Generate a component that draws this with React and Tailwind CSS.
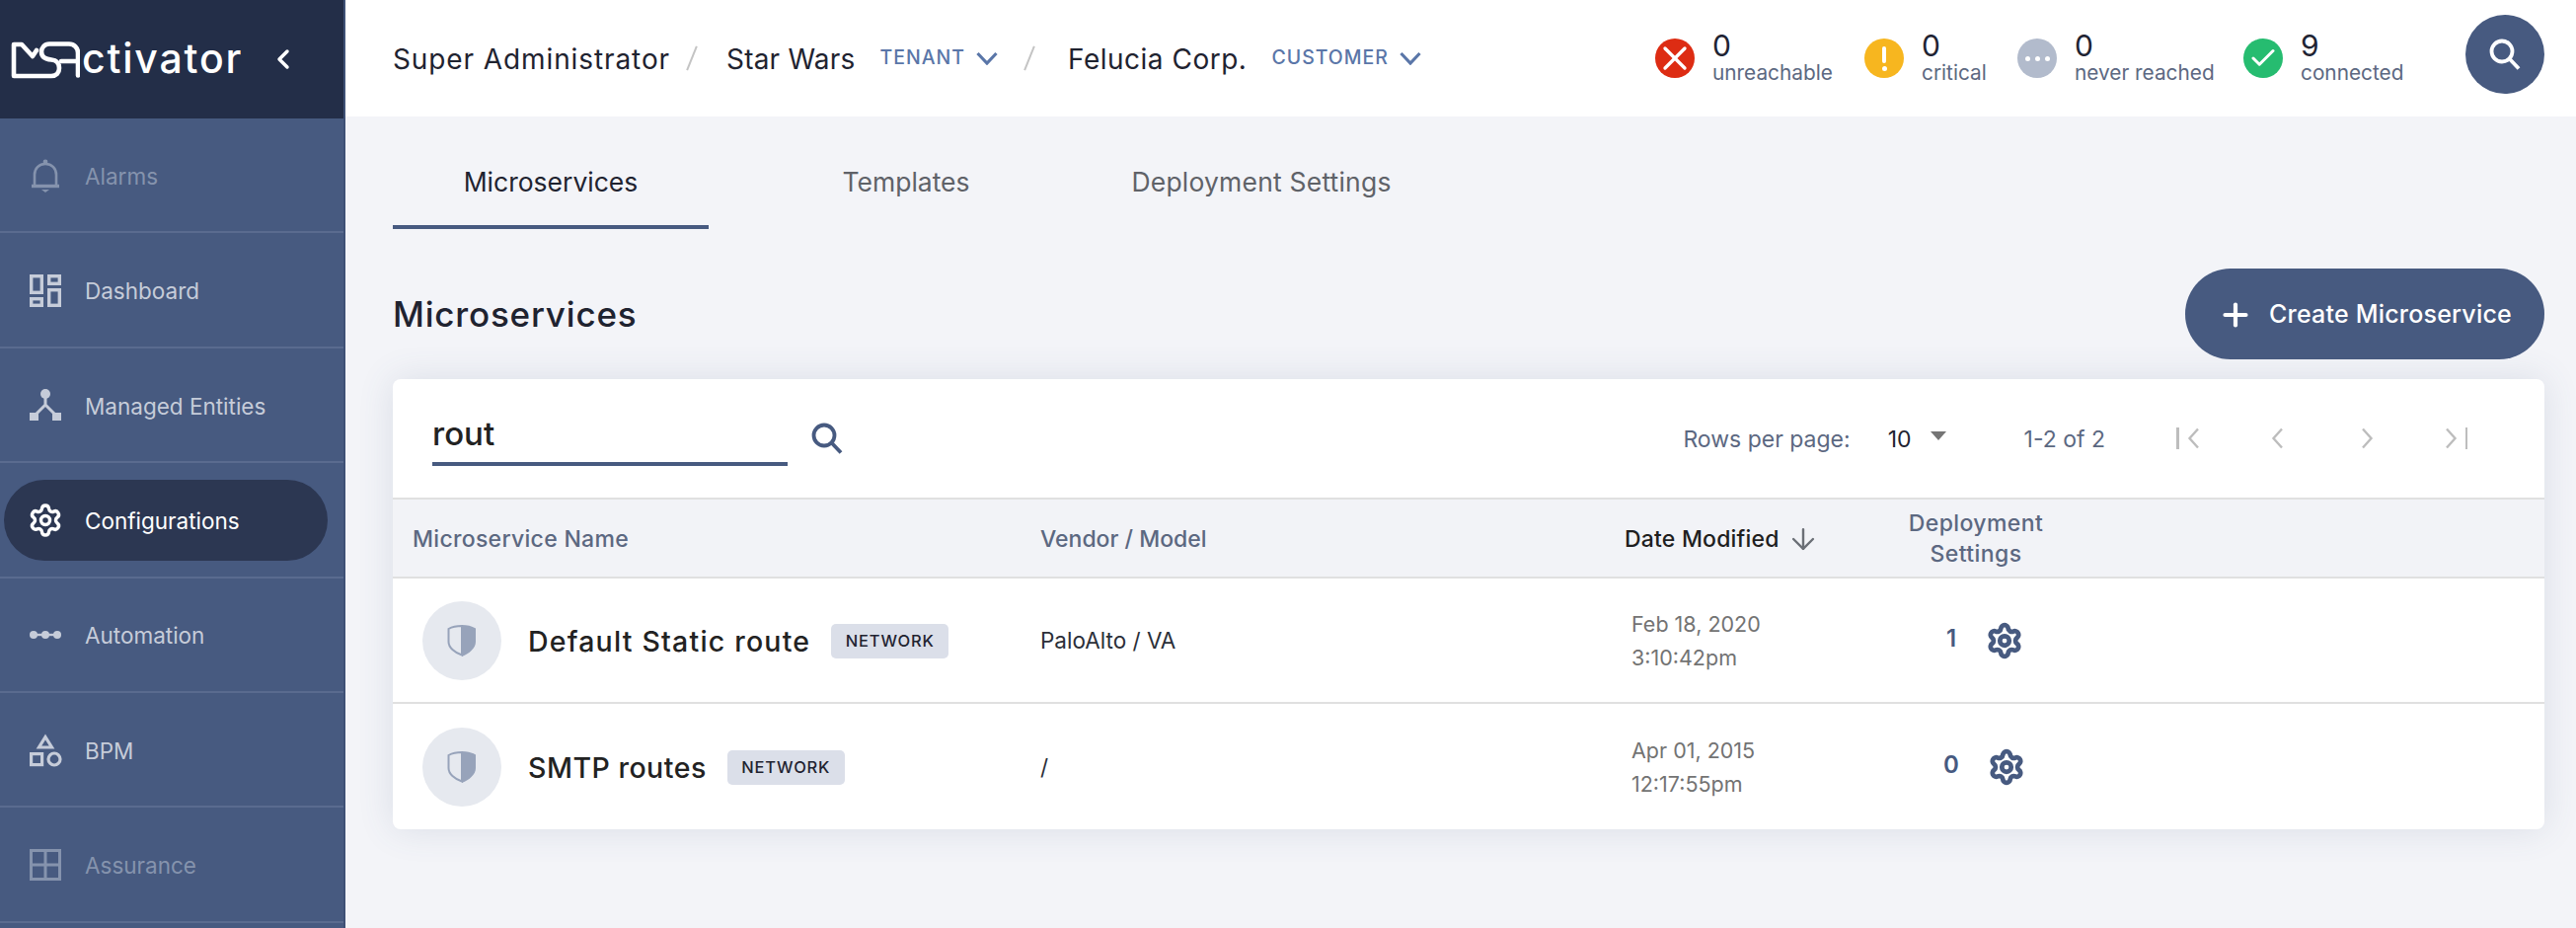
import React from 'react';
import { ChevronLeft, Plus, Settings, X, Check, ArrowDown } from 'lucide-react';

const NAV_ITEMS = [
  { label: 'Alarms', icon: 'bell', tone: 'disabled' },
  { label: 'Dashboard', icon: 'dashboard', tone: 'normal' },
  { label: 'Managed Entities', icon: 'entities', tone: 'normal' },
  { label: 'Configurations', icon: 'gear', tone: 'active' },
  { label: 'Automation', icon: 'automation', tone: 'normal' },
  { label: 'BPM', icon: 'bpm', tone: 'normal' },
  { label: 'Assurance', icon: 'assurance', tone: 'disabled' },
];

const ROWS = [
  { name: 'Default Static route', tracking: 'tracking-[1.2px]', vendor: 'PaloAlto / VA', date: 'Feb 18, 2020', time: '3:10:42pm', count: 1, gearShift: 'ml-[15px]' },
  { name: 'SMTP routes', tracking: 'tracking-[0.5px]', vendor: '/', date: 'Apr 01, 2015', time: '12:17:55pm', count: 0, gearShift: 'ml-[17px]' },
];

function NavIcon({ name }) {
  if (name === 'gear') return <Settings className="w-[36px] h-[36px]" strokeWidth={2.3} />;
  const common = { width: 34, height: 36, viewBox: '0 0 34 36', fill: 'none', stroke: 'currentColor' };
  switch (name) {
    case 'bell':
      return (
        <svg {...common} strokeWidth="2.6">
          <path d="M6 27V17C6 10.5 10.5 6 17 6s11 4.5 11 11v10" />
          <path d="M3 28.5h28" strokeWidth="3.4" />
          <circle cx="17" cy="4" r="2.4" fill="currentColor" stroke="none" />
          <path d="M13 32h8l-4 3z" fill="currentColor" stroke="none" />
        </svg>
      );
    case 'dashboard':
      return (
        <svg {...common} strokeWidth="3.4">
          <rect x="2.7" y="3.7" width="10.6" height="16.6" />
          <rect x="20.7" y="3.7" width="10.6" height="7.6" />
          <rect x="2.7" y="26.7" width="10.6" height="6.6" />
          <rect x="20.7" y="17.7" width="10.6" height="15.6" />
        </svg>
      );
    case 'entities':
      return (
        <svg {...common} strokeWidth="3">
          <circle cx="17" cy="7" r="5" fill="currentColor" stroke="none" />
          <path d="M17 10v8M17 18L7 28M17 18l10 10" />
          <rect x="1" y="26" width="9" height="8" fill="currentColor" stroke="none" />
          <rect x="24" y="26" width="9" height="8" fill="currentColor" stroke="none" />
        </svg>
      );
    case 'automation':
      return (
        <svg {...common}>
          <path d="M4 18h26" strokeWidth="2.4" />
          <circle cx="5" cy="18" r="4" fill="currentColor" stroke="none" />
          <circle cx="17" cy="18" r="4" fill="currentColor" stroke="none" />
          <circle cx="29" cy="18" r="4" fill="currentColor" stroke="none" />
        </svg>
      );
    case 'bpm':
      return (
        <svg {...common} strokeWidth="3.2">
          <path d="M17 4.5l6.5 10.5h-13z" />
          <rect x="2.6" y="21.6" width="11" height="11" />
          <circle cx="26" cy="27" r="6" />
        </svg>
      );
    default:
      return (
        <svg {...common} strokeWidth="3">
          <rect x="2.5" y="3.5" width="29" height="29" />
          <path d="M17 3.5v29M2.5 18h29" />
        </svg>
      );
  }
}

function SearchGlyph({ className = '' }) {
  return (
    <svg width="32" height="32" viewBox="0 0 32 32" fill="none" stroke="currentColor" strokeWidth="3.8" className={className}>
      <circle cx="13" cy="13" r="10.500" />
      <path d="M20.500 20.500L30 30.500" />
    </svg>
  );
}

function NavRow({ item }) {
  const color =
    item.tone === 'active' ? 'text-white' : item.tone === 'disabled' ? 'text-[#8593ad]' : 'text-[#c6ccd9]';
  return (
    <div className="h-[116.4px] border-b-2 border-[#5a6b8f] flex items-center relative">
      <div className={`flex items-center h-[82px] w-[328px] ml-1 mt-[1px] rounded-full ${item.tone === 'active' ? 'bg-[#2c3752]' : ''} ${color}`}>
        <span className="w-[82px] flex justify-center shrink-0 pl-[1px]">
          <NavIcon name={item.icon} />
        </span>
        <span className="text-[22.5px] pt-[2px]">{item.label}</span>
      </div>
    </div>
  );
}

function Sidebar() {
  return (
    <aside className="w-[350px] shrink-0 bg-[#475a80] border-r-2 border-[#3f5176] overflow-hidden">
      <div className="h-[120px] bg-[#232e48] flex items-center text-white">
        <svg width="81" height="60" viewBox="0 0 81 60" fill="none" stroke="white" strokeWidth="4.6" strokeLinecap="round" strokeLinejoin="round" className="shrink-0 mt-[3px]">
          <path d="M37 19l-4 6-11-12h-8v32h38c5 0 8-3 8-8 0-5-3-8-8-8.500-6-.5-10-3-10-8 0-4 3-8 8-8h20c5 0 9 4 9 9v23" />
          <path d="M62 30h17" />
        </svg>
        <span className="text-[41px] font-medium leading-none tracking-[1.8px] ml-[2px] -mt-[1px]">ctivator</span>
        <ChevronLeft className="w-[32px] h-[32px] ml-[25px]" strokeWidth={2.6} />
      </div>
      {NAV_ITEMS.map((item) => (
        <NavRow key={item.label} item={item} />
      ))}
    </aside>
  );
}

function Crumb({ children, className = '' }) {
  return <span className={`text-[28px] pt-[2px] text-[#1f2330] whitespace-nowrap ${className}`}>{children}</span>;
}

function Slash({ className = '' }) {
  return <span className={`w-[2px] h-[26px] bg-[#c4c4c4] rotate-[22deg] shrink-0 ${className}`} />;
}

function ScopeLabel({ children, className = '' }) {
  return (
    <span className={`flex items-center text-[#5a76a8] text-[19.5px] font-medium tracking-[1px] whitespace-nowrap ${className}`}>
      {children}
      <svg width="22" height="14" viewBox="0 0 22 14" fill="none" stroke="currentColor" strokeWidth="3.2" className="ml-[11px]">
        <path d="M1.500 2L11 12l9.500-10" />
      </svg>
    </span>
  );
}

function Status({ bg, count, label, width, children }) {
  return (
    <div className={`flex items-center ${width}`}>
      <span className={`w-[40px] h-[40px] rounded-full flex items-center justify-center shrink-0 ${bg}`}>{children}</span>
      <div className="ml-[18px] -mt-[2px]">
        <div className="text-[30px] leading-[32px] text-[#1f2433]">{count}</div>
        <div className="text-[20.8px] leading-[24px] text-[#5c6881] whitespace-nowrap">{label}</div>
      </div>
    </div>
  );
}

function TopBar() {
  return (
    <header className="h-[118px] bg-white flex items-center pl-[48px] pr-[32px]">
      <Crumb className="tracking-[0.9px]">Super Administrator</Crumb>
      <Slash className="ml-[21px]" />
      <Crumb className="ml-[34px] tracking-[0.2px]">Star Wars</Crumb>
      <ScopeLabel className="ml-[25px]">TENANT</ScopeLabel>
      <Slash className="ml-[31px]" />
      <Crumb className="ml-[38px] tracking-[0.5px]">Felucia Corp.</Crumb>
      <ScopeLabel className="ml-[25px]">CUSTOMER</ScopeLabel>
      <div className="ml-auto flex items-center">
        <Status bg="bg-[#dd2c13]" count="0" label="unreachable" width="w-[212px]">
          <X className="w-[40px] h-[40px] text-white" strokeWidth={2} />
        </Status>
        <Status bg="bg-[#f7b61f]" count="0" label="critical" width="w-[155px]">
          <span className="flex flex-col items-center">
            <span className="w-[4px] h-[17px] bg-white rounded-full" />
            <span className="w-[5px] h-[5px] bg-white rounded-full mt-[3px]" />
          </span>
        </Status>
        <Status bg="bg-[#b2bbcc]" count="0" label="never reached" width="w-[229px]">
          <span className="flex gap-[5px]">
            <span className="w-[5px] h-[5px] bg-white rounded-full" />
            <span className="w-[5px] h-[5px] bg-white rounded-full" />
            <span className="w-[5px] h-[5px] bg-white rounded-full" />
          </span>
        </Status>
        <Status bg="bg-[#26bc70]" count="9" label="connected" width="w-[225px]">
          <Check className="w-[30px] h-[30px] text-white" strokeWidth={2.4} />
        </Status>
        <button className="w-[80px] h-[80px] -mt-[8px] rounded-full bg-[#475a80] flex items-center justify-center">
          <SearchGlyph className="text-white" />
        </button>
      </div>
    </header>
  );
}

function Tabs() {
  const tabs = ['Microservices', 'Templates', 'Deployment Settings'];
  return (
    <div className="flex gap-[40px] mt-[18px]">
      {tabs.map((tab, i) => (
        <div
          key={tab}
          className={`w-[320px] h-[96px] pt-[6px] flex items-center justify-center text-[26.5px] border-b-4 ${
            i === 0 ? 'border-[#475a80] text-[#1f2330]' : 'border-transparent text-[#5f6268]'
          } ${i === 2 ? 'tracking-[0.2px]' : ''}`}
        >
          {tab}
        </div>
      ))}
    </div>
  );
}

function ShieldIcon() {
  return (
    <svg width="30" height="33" viewBox="0 0 30 33" fill="none">
      <path d="M15 2C10 2 5 3 1.500 5v13c0 6 6 11 13.500 13.500z" stroke="#97a3ba" strokeWidth="2" />
      <path d="M15 1c5 0 10 1 14 3.500V18c0 6.500-6.500 12-14 15z" fill="#97a3ba" />
    </svg>
  );
}

function Badge() {
  return (
    <span className="w-[119px] h-[35px] mt-[2px] rounded-[5px] bg-[#dbdfe9] flex items-center justify-center text-[16.500px] font-medium tracking-[0.8px] text-[#1f2330] ml-[21px]">
      NETWORK
    </span>
  );
}

function PagerChevron({ flip = false }) {
  return (
    <svg width="13" height="22" viewBox="0 0 13 22" fill="none" stroke="#bdbdbd" strokeWidth="2.4" className={flip ? 'rotate-180' : ''}>
      <path d="M11 1.500L2.500 11 11 20.500" />
    </svg>
  );
}

function Pagination() {
  return (
    <div className="flex items-center text-[23px] text-[#5c6881] ml-auto pr-[78px]">
      <span className="pt-[2px]">Rows per page:</span>
      <span className="pt-[2px] text-[#1f2330] ml-[38px]">10</span>
      <span className="ml-[19px] -mt-[6px] w-0 h-0 border-l-[8px] border-r-[8px] border-t-[9px] border-l-transparent border-r-transparent border-t-[#757575]" />
      <span className="pt-[2px] ml-[79px]">1-2 of 2</span>
      <span className="ml-[72px] flex items-center gap-[8px]">
        <span className="w-[2.500px] h-[22px] bg-[#bdbdbd]" />
        <PagerChevron />
      </span>
      <span className="ml-[72px] flex"><PagerChevron /></span>
      <span className="ml-[78px] flex"><PagerChevron flip /></span>
      <span className="ml-[72px] flex items-center gap-[8px]">
        <PagerChevron flip />
        <span className="w-[2.500px] h-[22px] bg-[#bdbdbd]" />
      </span>
    </div>
  );
}

function MicroserviceTable() {
  return (
    <div className="mt-[20px] bg-white rounded-[8px] shadow-[0_0_36px_rgba(71,90,128,0.14)] overflow-hidden">
      <div className="h-[120px] flex items-center pl-[40px]">
        <div className="w-[360px] h-[61px] -mt-[5px] border-b-4 border-[#475a80] flex items-center text-[33px] font-medium text-[#222222]">
          rout
        </div>
        <SearchGlyph className="text-[#475a80] ml-[24px]" />
        <Pagination />
      </div>
      <div className="h-[82px] pt-[2px] bg-[#f2f3f7] border-y-2 border-[#e0e0e0] grid grid-cols-[656px_592px_236px_240px] items-center text-[23px] font-medium text-[#5c6881]">
        <span className="pl-[20px] tracking-[0.3px]">Microservice Name</span>
        <span>Vendor / Model</span>
        <span className="flex items-center text-[#1f1f1f] tracking-[0.2px]">
          Date Modified
          <ArrowDown className="w-[34px] h-[34px] ml-[7px] text-[#6b6f76]" strokeWidth={1.7} />
        </span>
        <span className="text-center leading-[31px] tracking-[0.4px]">
          Deployment
          <br />
          Settings
        </span>
      </div>
      {ROWS.map((row, i) => (
        <div
          key={row.name}
          className={`h-[127px] grid grid-cols-[656px_592px_236px_240px] items-center ${i === 0 ? 'border-b-2 border-[#e0e0e0]' : ''}`}
        >
          <div className="flex items-center pl-[30px]">
            <span className="w-[80px] h-[80px] rounded-full bg-[#e6e9ef] flex items-center justify-center shrink-0">
              <ShieldIcon />
            </span>
            <span className={`ml-[27px] pt-[3px] text-[28.5px] font-medium text-[#222222] ${row.tracking}`}>{row.name}</span>
            <Badge />
          </div>
          <span className="text-[22.5px] text-[#2b2f38]">{row.vendor}</span>
          <div className="pl-[7px] text-[21.5px] leading-[34px] text-[#737373]">
            <div>{row.date}</div>
            <div>{row.time}</div>
          </div>
          <div className="flex items-center pl-[75px]">
            <span className="w-[40px] text-center text-[24px] font-semibold text-[#475a80] -mt-[3px]">{row.count}</span>
            <Settings className={`w-[38px] h-[38px] text-[#475a80] ${row.gearShift}`} strokeWidth={3} />
          </div>
        </div>
      ))}
    </div>
  );
}

export default function App() {
  return (
    <div className="h-[940px] w-[2610px] flex overflow-hidden bg-[#f3f4f8] font-['Inter',sans-serif]">
      <Sidebar />
      <main className="flex-1 min-w-0">
        <TopBar />
        <div className="pl-[48px] pr-[32px]">
          <Tabs />
          <div className="mt-[40px] h-[92px] flex items-center justify-between">
            <h1 className="text-[35px] font-medium tracking-[0.8px] text-[#1f2330]">Microservices</h1>
            <button className="w-[364px] h-[92px] pt-[2px] rounded-full bg-[#475a80] flex items-center justify-center text-white text-[25px] font-medium tracking-[0.2px]">
              <Plus className="w-[36px] h-[36px] mr-[16px]" strokeWidth={2.8} />
              Create Microservice
            </button>
          </div>
          <MicroserviceTable />
        </div>
      </main>
    </div>
  );
}
